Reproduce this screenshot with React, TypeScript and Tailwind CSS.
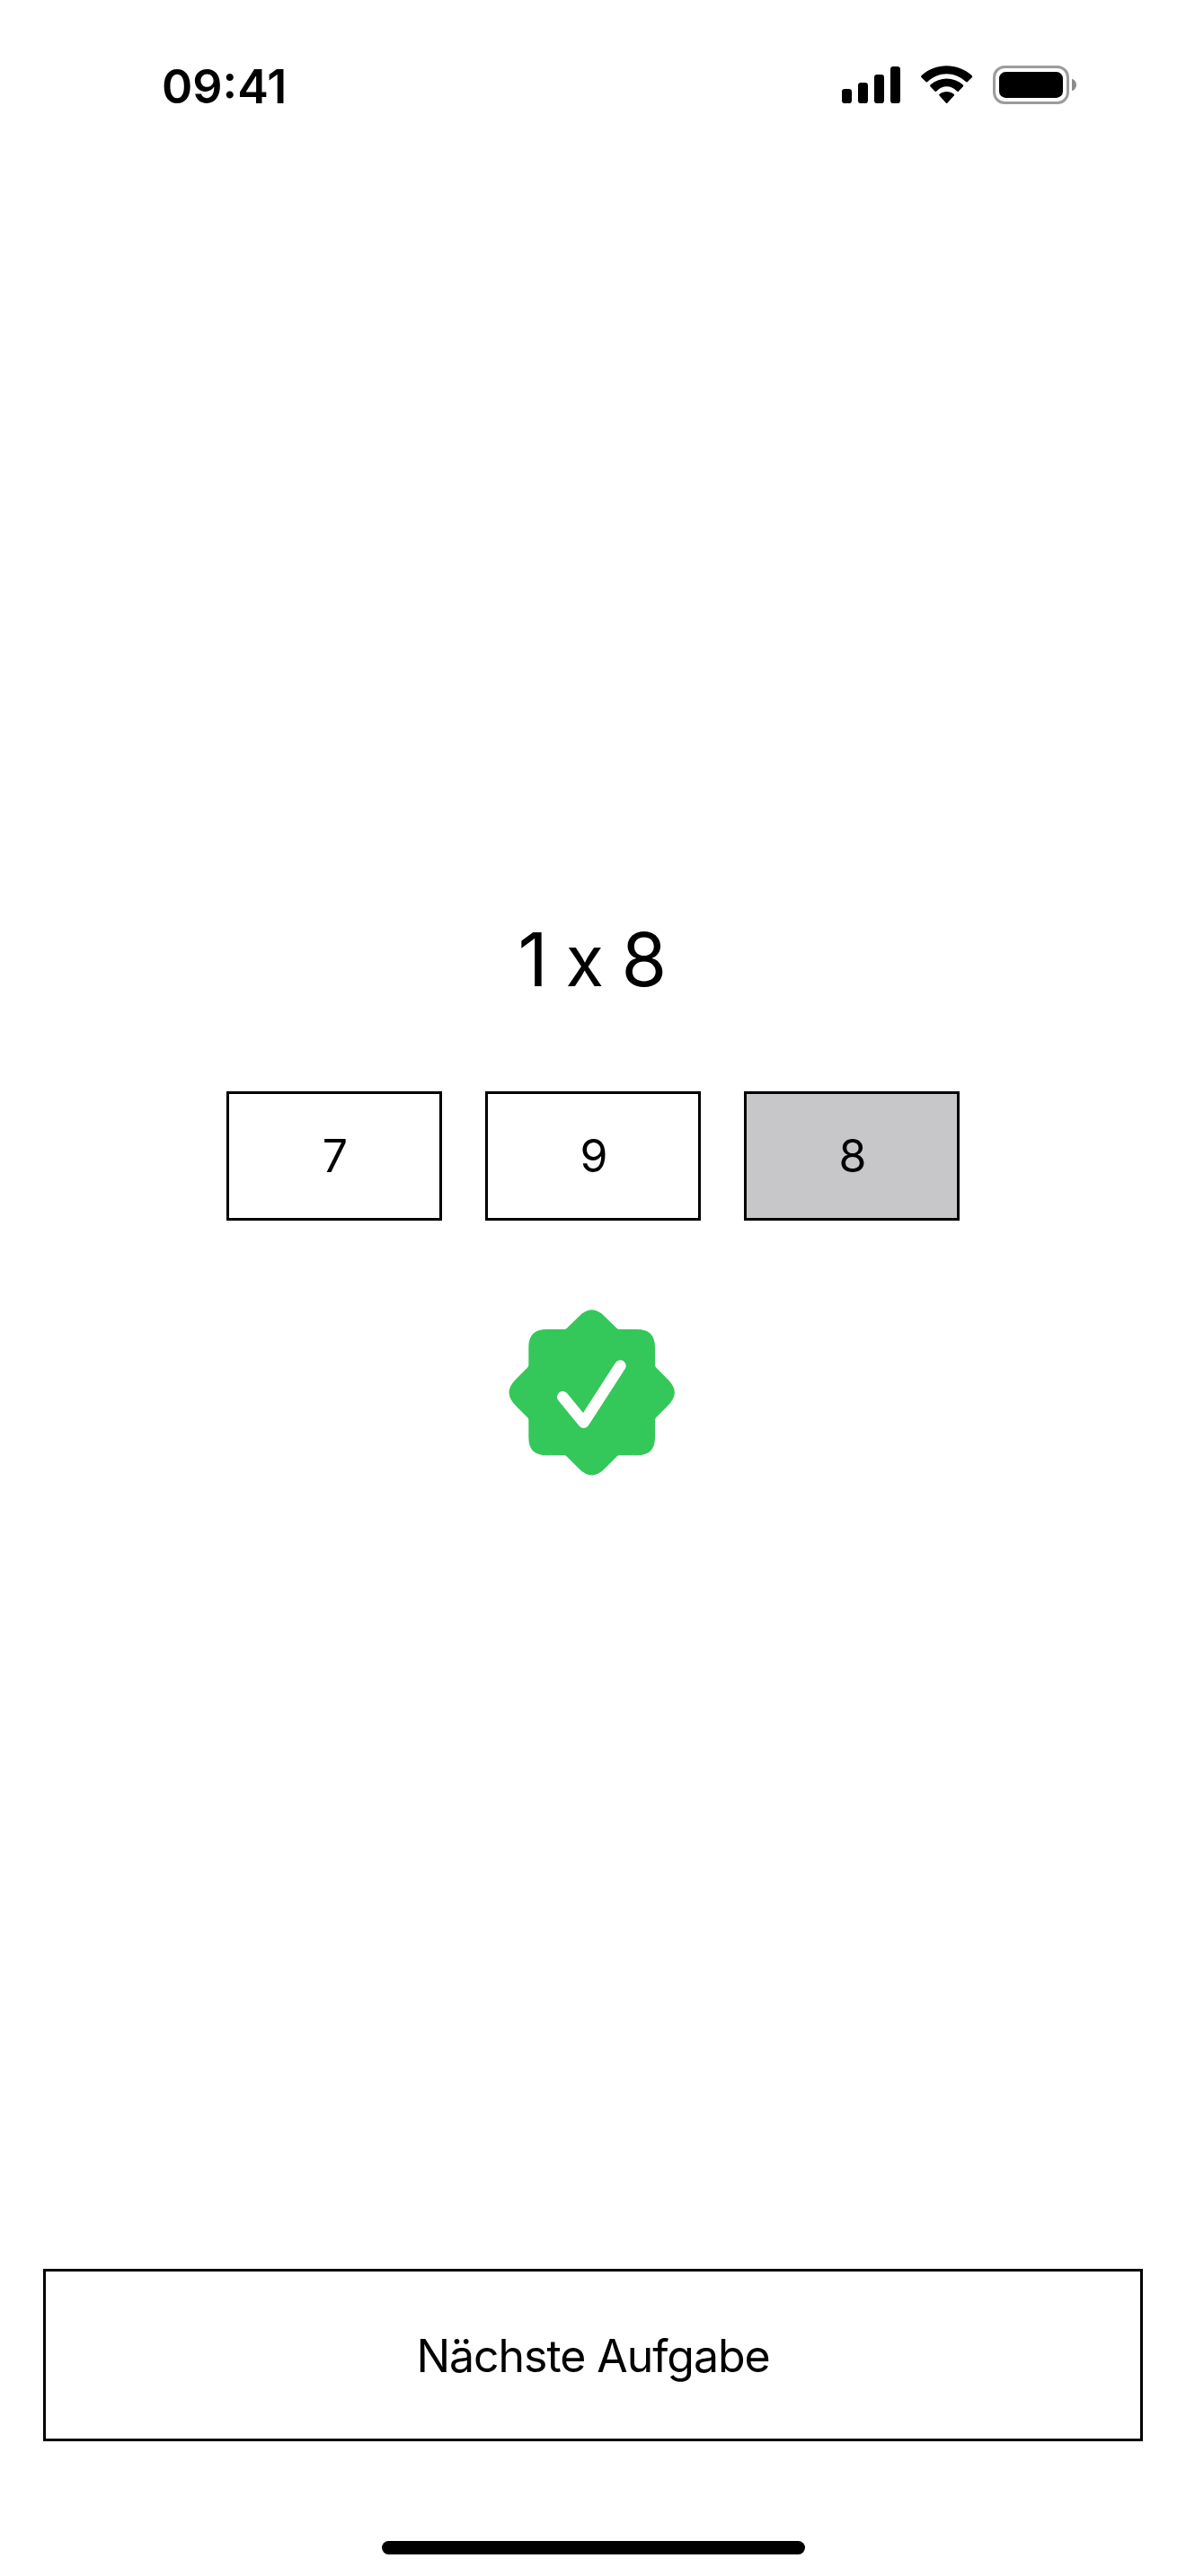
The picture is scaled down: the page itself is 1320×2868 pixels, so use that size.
function StatusIcons() {
  return (
    <svg className="h-[70px] w-[300px]" viewBox="0 0 900 210" fill="black" aria-hidden="true">
      <rect x="51" y="117" width="33" height="48" rx="10" />
      <rect x="105" y="96" width="33" height="69" rx="10" />
      <rect x="159" y="69" width="33" height="96" rx="10" />
      <rect x="213" y="42" width="33" height="123" rx="10" />
      <path d="M316 78Q314 75 317 72C364 29 437 29 485 72Q488 75 486 78L470 94Q467 95 465 93C428 58 374 58 337 93Q335 95 332 94Z" />
      <path d="M346 109Q344 106 347 103C379 76 423 76 455 103Q458 106 456 109L440 125Q437 127 434 124C415 104 387 104 368 124Q365 127 362 125Z" />
      <path d="M376 139Q374 136 377 134C392 123 410 123 425 134Q428 136 426 139L403 164Q401 166 399 164Z" />
      <rect x="559.5" y="43.5" width="246" height="120" rx="35" fill="none" stroke="#9c9c9c" strokeWidth="9" />
      <rect x="576" y="60" width="213" height="87" rx="22" />
      <path d="M819 83C839 89 839 117 819 124Z" fill="#8c8c8c" />
    </svg>
  );
}

function SuccessBadge() {
  return (
    <svg className="mt-[87px] mr-[2px] h-[206px] w-[206px] shrink-0" viewBox="0 0 618 618" role="img" aria-label="Richtig">
      <path
        fill="#34c759"
        d="M264 60C294 29 322 29 352 60L391 98Q395 102 400 102H458C500 102 519 122 519 163V221Q519 226 523 230L562 269C592 299 592 327 562 357L523 396Q519 400 519 405V463C519 504 500 523 458 523H400Q395 523 391 527L352 566C322 597 294 597 264 566L225 527Q221 523 216 523H158C116 523 97 504 97 463V405Q97 400 93 396L54 357C24 327 24 299 54 269L93 230Q97 226 97 221V163C97 122 116 102 158 102H216Q221 102 225 98Z"
      />
      <path d="M211 328L281 413L403 224" fill="none" stroke="white" strokeWidth="38" strokeLinecap="round" strokeLinejoin="round" />
    </svg>
  );
}

const answers = [
  { value: 7, selected: false },
  { value: 9, selected: false },
  { value: 8, selected: true },
];

export default function App() {
  return (
    <main className="flex h-[2868px] w-[1320px] flex-col items-center bg-white font-['Inter',sans-serif] text-black">
      <header className="flex h-[177px] w-full shrink-0 items-start justify-between pr-[100px] pl-[180px]">
        <time className="mt-[65px] text-[52px] leading-[64px] font-semibold">09:41</time>
        <div className="mt-[60px]">
          <StatusIcons />
        </div>
      </header>

      <h1 className="mt-[842px] h-[100px] shrink-0 pr-[3px] text-[82px] leading-[100px] font-normal tracking-[-1.8px] whitespace-nowrap [font-feature-settings:'calt'_0]">
        1 <span className="text-[78px]">x</span> 8
      </h1>

      <div className="mt-[96px] flex shrink-0 gap-12">
        {answers.map(({ value, selected }) => (
          <button
            key={value}
            className={`flex h-36 w-60 items-center justify-center border-3 border-black pl-0.5 text-[50px] leading-[60px] ${selected ? "bg-[#c7c7c9]" : "bg-white"}`}
          >
            {value}
          </button>
        ))}
      </div>

      <SuccessBadge />

      <div className="mt-auto w-full shrink-0 px-12">
        <button className="flex h-48 w-full items-center justify-center border-3 border-black pt-0.5 text-[50px] leading-[60px] tracking-[-1.05px]">
          Nächste Aufgabe
        </button>
      </div>

      <div className="mt-[111px] mb-6 ml-px h-[15px] w-[471px] shrink-0 rounded-full bg-black" />
    </main>
  );
}
